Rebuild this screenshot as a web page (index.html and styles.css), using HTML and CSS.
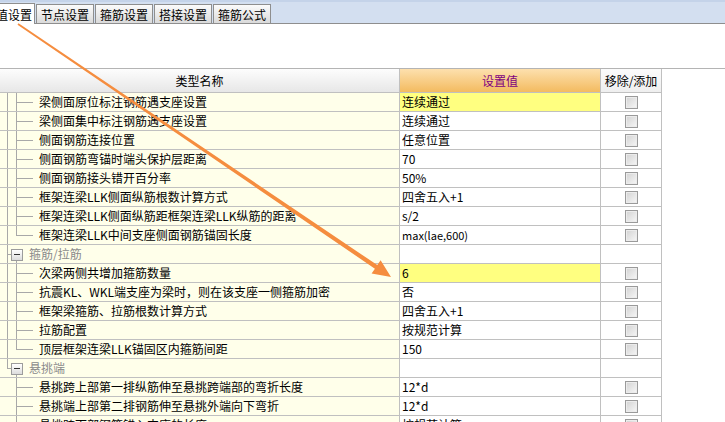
FILE: index.html
```html
<!DOCTYPE html>
<html lang="zh-CN">
<head>
<meta charset="utf-8">
<title>设置</title>
<link rel="stylesheet" href="styles.css">
</head>
<body>
<div class="tabbar">
  <div class="tab active">值设置</div>
  <div class="tab">节点设置</div>
  <div class="tab">箍筋设置</div>
  <div class="tab">搭接设置</div>
  <div class="tab">箍筋公式</div>
</div>
<div class="blank"></div>
<div class="table">
  <div class="row head">
    <div class="c name">类型名称</div>
    <div class="c val">设置值</div>
    <div class="c chk">移除/添加</div>
  </div>
  <div class="row"><div class="c name"><span class="tree t-c"></span>梁侧面原位标注钢筋遇支座设置</div><div class="c val sel">连续通过</div><div class="c chk"><span class="box"></span></div></div>
  <div class="row"><div class="c name"><span class="tree t-c"></span>梁侧面集中标注钢筋遇支座设置</div><div class="c val">连续通过</div><div class="c chk"><span class="box"></span></div></div>
  <div class="row"><div class="c name"><span class="tree t-c"></span>侧面钢筋连接位置</div><div class="c val">任意位置</div><div class="c chk"><span class="box"></span></div></div>
  <div class="row"><div class="c name"><span class="tree t-c"></span>侧面钢筋弯锚时端头保护层距离</div><div class="c val">70</div><div class="c chk"><span class="box"></span></div></div>
  <div class="row"><div class="c name"><span class="tree t-c"></span>侧面钢筋接头错开百分率</div><div class="c val">50%</div><div class="c chk"><span class="box"></span></div></div>
  <div class="row"><div class="c name"><span class="tree t-c"></span>框架连梁LLK侧面纵筋根数计算方式</div><div class="c val">四舍五入+1</div><div class="c chk"><span class="box"></span></div></div>
  <div class="row"><div class="c name"><span class="tree t-c"></span>框架连梁LLK侧面纵筋距框架连梁LLK纵筋的距离</div><div class="c val">s/2</div><div class="c chk"><span class="box"></span></div></div>
  <div class="row"><div class="c name"><span class="tree t-cl"></span>框架连梁LLK中间支座侧面钢筋锚固长度</div><div class="c val small">max(lae,600)</div><div class="c chk"><span class="box"></span></div></div>
  <div class="row group"><div class="c name"><span class="tree t-g"><span class="minus"></span></span><span class="glabel">箍筋/拉筋</span></div><div class="c val"></div><div class="c chk"></div></div>
  <div class="row"><div class="c name"><span class="tree t-c"></span>次梁两侧共增加箍筋数量</div><div class="c val sel">6</div><div class="c chk"><span class="box"></span></div></div>
  <div class="row"><div class="c name"><span class="tree t-c"></span>抗震KL、WKL端支座为梁时，则在该支座一侧箍筋加密</div><div class="c val">否</div><div class="c chk"><span class="box"></span></div></div>
  <div class="row"><div class="c name"><span class="tree t-c"></span>框架梁箍筋、拉筋根数计算方式</div><div class="c val">四舍五入+1</div><div class="c chk"><span class="box"></span></div></div>
  <div class="row"><div class="c name"><span class="tree t-c"></span>拉筋配置</div><div class="c val">按规范计算</div><div class="c chk"><span class="box"></span></div></div>
  <div class="row"><div class="c name"><span class="tree t-cl"></span>顶层框架连梁LLK锚固区内箍筋间距</div><div class="c val">150</div><div class="c chk"><span class="box"></span></div></div>
  <div class="row group"><div class="c name"><span class="tree t-gl"><span class="minus"></span></span><span class="glabel">悬挑端</span></div><div class="c val"></div><div class="c chk"></div></div>
  <div class="row"><div class="c name"><span class="tree t-x"></span>悬挑跨上部第一排纵筋伸至悬挑跨端部的弯折长度</div><div class="c val">12*d</div><div class="c chk"><span class="box"></span></div></div>
  <div class="row"><div class="c name"><span class="tree t-x"></span>悬挑端上部第二排钢筋伸至悬挑外端向下弯折</div><div class="c val">12*d</div><div class="c chk"><span class="box"></span></div></div>
  <div class="row"><div class="c name"><span class="tree t-x"></span>悬挑跨下部钢筋锚入支座的长度</div><div class="c val">按规范计算</div><div class="c chk"><span class="box"></span></div></div>
</div>
<svg class="arrow" width="725" height="422" viewBox="0 0 725 422">
  <polygon fill="#f58d3f" points="17.5,24.7 18.5,23.3 377.3,265.1 380.6,260.3 391,277 371.6,273.5 374.9,268.7"/>
</svg>
</body>
</html>
```
FILE: styles.css
```css
html, body {
  margin: 0;
  padding: 0;
}
body {
  width: 725px;
  height: 422px;
  overflow: hidden;
  position: relative;
  background: #fff;
  color: #000;
  font-family: "Noto Sans CJK SC", "Noto Sans", sans-serif;
  font-size: 12px;
  --tl: #a8a8a8;
  --grid: #c0c0c0;
}

/* tabs */
.tabbar {
  height: 23px;
  border-bottom: 1px solid #8e8e8e;
  background: linear-gradient(#c4d3e9 0, #c4d3e9 2px, #d3dff0 2px, #d3dff0 100%);
  display: flex;
  align-items: flex-end;
  gap: 1px;
  overflow: visible;
}
.tab {
  box-sizing: border-box;
  height: 19px;
  padding: 1px 4px 0 4px;
  line-height: 17px;
  border: 1px solid #8e8e8e;
  border-bottom: none;
  background: linear-gradient(#fbfbfb, #dadada);
  white-space: nowrap;
  width: 58px;
}
.tab.active {
  width: 44px;
  height: 21px;
  margin-left: -9px;
  margin-bottom: -1px;
  padding: 2px 2px 0 5px;
  background: #fff;
  border-left: none;
}

.blank {
  height: 44px;
}

/* table */
.table {
  border-top: 1px solid #b4b4b4;
}
.row {
  display: grid;
  grid-template-columns: 400px 201px 61px;
  height: 19px;
}
.c {
  box-sizing: border-box;
  height: 19px;
  line-height: 18px;
  border-right: 1px solid var(--grid);
  border-bottom: 1px solid var(--grid);
  white-space: nowrap;
  overflow: hidden;
}
.name {
  background: #ffffea;
  display: flex;
}
.val {
  background: #fff;
  padding-left: 2px;
}
.val.sel {
  background: #ffff80;
}
.val.small {
  font-size: 11px;
}
.chk {
  display: flex;
  justify-content: center;
  align-items: center;
  background: #fff;
}
.box {
  box-sizing: border-box;
  width: 13px;
  height: 13px;
  border: 1px solid #9a9a9a;
  background: linear-gradient(135deg, #d2d2d2, #f7f7f7);
  box-shadow: inset 0 0 0 1px #ececec;
}

/* header */
.row.head {
  height: 24px;
}
.head .c {
  height: 24px;
  line-height: 23px;
  text-align: center;
  padding: 0;
}
.head .name {
  justify-content: center;
  background: linear-gradient(#fdfdfd, #e7e7e7);
}
.head .val {
  background: linear-gradient(#fde0ae, #f3bb60);
  color: #800080;
}
.head .chk {
  background: linear-gradient(#fbfbfb, #efefef);
}

/* tree */
.tree {
  flex: none;
  width: 39px;
  height: 18px;
}
.t-c {
  background:
    linear-gradient(var(--tl), var(--tl)) 7px 0 / 1px 100% no-repeat,
    linear-gradient(var(--tl), var(--tl)) 16px 0 / 1px 100% no-repeat,
    linear-gradient(var(--tl), var(--tl)) 16px 9px / 17px 1px no-repeat;
}
.t-cl {
  background:
    linear-gradient(var(--tl), var(--tl)) 7px 0 / 1px 100% no-repeat,
    linear-gradient(var(--tl), var(--tl)) 16px 0 / 1px 10px no-repeat,
    linear-gradient(var(--tl), var(--tl)) 16px 9px / 17px 1px no-repeat;
}
.t-x {
  background:
    linear-gradient(var(--tl), var(--tl)) 16px 0 / 1px 100% no-repeat,
    linear-gradient(var(--tl), var(--tl)) 16px 9px / 17px 1px no-repeat;
}
.t-g,
.t-gl {
  width: 24px;
  display: flex;
  align-items: center;
  padding-left: 11px;
  box-sizing: border-box;
}
.t-g {
  background:
    linear-gradient(var(--tl), var(--tl)) 7px 0 / 1px 100% no-repeat,
    linear-gradient(var(--tl), var(--tl)) 7px 9px / 5px 1px no-repeat,
    linear-gradient(var(--tl), var(--tl)) 16px 14px / 1px 4px no-repeat;
}
.t-gl {
  background:
    linear-gradient(var(--tl), var(--tl)) 7px 0 / 1px 10px no-repeat,
    linear-gradient(var(--tl), var(--tl)) 7px 9px / 5px 1px no-repeat,
    linear-gradient(var(--tl), var(--tl)) 16px 14px / 1px 4px no-repeat;
}
.minus {
  box-sizing: border-box;
  width: 12px;
  height: 12px;
  margin-top: 1px;
  border: 1px solid #9c9c9c;
  background:
    linear-gradient(#333, #333) center / 6px 1px no-repeat,
    linear-gradient(#ffffff, #dcdcdc);
}
.glabel {
  padding-left: 5px;
  color: #8a8a8a;
}

/* annotation arrow */
.arrow {
  position: absolute;
  left: 0;
  top: 0;
  pointer-events: none;
}
```
